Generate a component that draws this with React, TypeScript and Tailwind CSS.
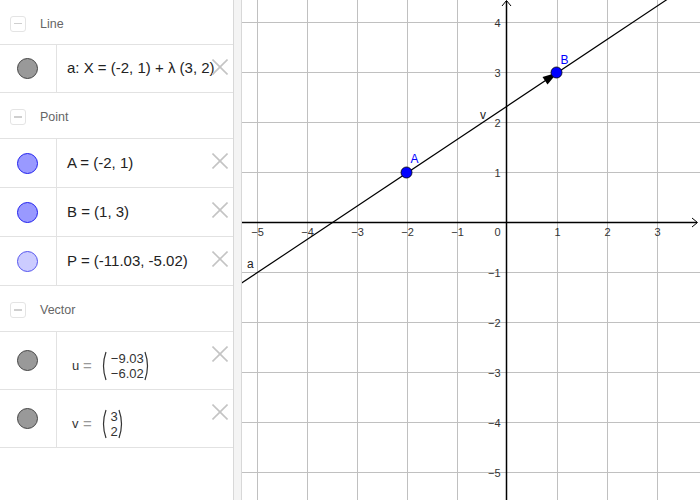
import React from "react";

const font = { fontFamily: '"Liberation Sans", Arial, sans-serif' };

function XIcon() {
  return (
    <svg width="16" height="16" viewBox="0 0 16 16" className="absolute right-[5px] top-[14px]">
      <line x1="0.5" y1="0.5" x2="15.5" y2="15.5" stroke="#c4c4c4" strokeWidth="1.6" />
      <line x1="15.5" y1="0.5" x2="0.5" y2="15.5" stroke="#c4c4c4" strokeWidth="1.6" />
    </svg>
  );
}

function Header({ title, h }: { title: string; h: string }) {
  return (
    <div className={`flex items-center border-b border-[#e2e2e2] ${h}`}>
      <div className="ml-[10px] mt-[3px] flex h-[16px] w-[16px] items-center justify-center rounded-[3px] border border-[#e4e4e4]">
        <div className="h-[1.5px] w-[8px] bg-[#cfcfcf]" />
      </div>
      <span className="ml-[14px] mt-[4px] text-[12.5px] text-[#666]">{title}</span>
    </div>
  );
}

function Dot({ fill, stroke }: { fill: string; stroke: string }) {
  return <div className={`h-[21px] w-[21px] rounded-full border ${fill} ${stroke}`} />;
}

function Row({ h, dot, children, top }: { h: string; dot: React.ReactNode; children: React.ReactNode; top?: boolean }) {
  return (
    <div className={`relative flex border-b border-[#e2e2e2] ${h}`}>
      <div className="flex w-[57px] shrink-0 items-center justify-center border-r border-[#e2e2e2] pr-[1px]">{dot}</div>
      <div className={`flex flex-1 pl-[10px] ${top ? "items-start pt-[19px]" : "items-center"} text-[15px] text-[#222] whitespace-nowrap`}>
        {children}
      </div>
      <XIcon />
    </div>
  );
}

function Paren({ h, right }: { h: number; right?: boolean }) {
  const d = right ? `M1 1 Q6 ${h / 2} 1 ${h - 1}` : `M6 1 Q1 ${h / 2} 6 ${h - 1}`;
  return (
    <svg width="7" height={h} viewBox={`0 0 7 ${h}`}>
      <path d={d} stroke="#333" strokeWidth="1.2" fill="none" />
    </svg>
  );
}

function VecRow({ name, vals, nw }: { name: string; vals: string[]; nw: string }) {
  return (
    <div className="flex items-center text-[13px] text-[#333]">
      <span className="ml-[5px] w-[11px]">{name}</span>
      <span className="text-[#999] text-[15px]">=</span>
      <span className="ml-[8px] flex items-center">
        <Paren h={30} />
        <span className={`ml-[3px] flex flex-col items-end leading-[15px] ${nw}`}>
          {vals.map((v) => (
            <span key={v}>{v}</span>
          ))}
        </span>
        <Paren h={30} right />
      </span>
    </div>
  );
}

function Graph() {
  const ox = 265.5;
  const oy = 222.5;
  const u = 50;
  const xs = [-5, -4, -3, -2, -1, 1, 2, 3];
  const ys = [4, 3, 2, 1, -1, -2, -3, -4, -5];
  const px = (x: number) => ox + x * u;
  const py = (y: number) => oy - y * u;
  const lineY = (x: number) => py(1) - (2 / 3) * (x - px(-2));
  const A = [px(-2), py(1)];
  const B = [px(1), py(3)];
  const dx = 0.832, dy = -0.5547;
  const L = 15, W = 4.5;
  const bx = B[0] - L * dx, by = B[1] - L * dy;
  const nx = -dy * W, ny = dx * W;
  return (
    <svg width="458" height="500" viewBox="0 0 458 500" className="block" style={font}>
      <rect width="458" height="500" fill="#fff" />
      {[-5, -4, -3, -2, -1, 1, 2, 3].map((x) => (
        <line key={"gx" + x} x1={px(x)} y1={0} x2={px(x)} y2={500} stroke="#c0c0c0" strokeWidth="1" />
      ))}
      {[4, 3, 2, 1, -1, -2, -3, -4, -5].map((y) => (
        <line key={"gy" + y} x1={0} y1={py(y)} x2={458} y2={py(y)} stroke="#c0c0c0" strokeWidth="1" />
      ))}
      <line x1={0} y1={oy} x2={455} y2={oy} stroke="#000" strokeWidth="1.5" />
      <polyline points={`450,${oy - 4.5} 455.5,${oy} 450,${oy + 4.5}`} stroke="#000" strokeWidth="1" fill="none" />
      <line x1={ox - 1} y1={1} x2={ox - 1} y2={500} stroke="#000" strokeWidth="1.5" />
      <polyline points={`${ox - 5.5},6 ${ox - 1},0.5 ${ox + 3.5},6`} stroke="#000" strokeWidth="1" fill="none" />
      {xs.map((x) => (
        <text key={"lx" + x} x={px(x)} y={236} fontSize="11" fill="#333" textAnchor="middle">
          {x < 0 ? "\u2212" + -x : x}
        </text>
      ))}
      <text x={ox - 7} y={236} fontSize="11" fill="#333" textAnchor="end">0</text>
      {ys.map((y) => (
        <text key={"ly" + y} x={ox - 7} y={py(y) + 4} fontSize="11" fill="#333" textAnchor="end">
          {y < 0 ? "\u2212" + -y : y}
        </text>
      ))}
      <line x1={-20} y1={lineY(-20)} x2={500} y2={lineY(500)} stroke="#000" strokeWidth="1.2" />
      <polygon points={`${B[0]},${B[1]} ${bx + nx},${by + ny} ${bx - nx},${by - ny}`} fill="#000" />
      <circle cx={A[0] - 1} cy={A[1]} r="5.5" fill="#0000ff" stroke="#000" strokeWidth="0.8" />
      <circle cx={B[0] - 1} cy={B[1]} r="5.5" fill="#0000ff" stroke="#000" strokeWidth="0.8" />
      <text x={A[0] + 3} y={A[1] - 10} fontSize="12" fill="#0000ff">A</text>
      <text x={B[0] + 3} y={B[1] - 9} fontSize="12" fill="#0000ff">B</text>
      <text x={238} y={119} fontSize="12" fill="#222">v</text>
      <text x={5} y={268} fontSize="12" fill="#222">a</text>
    </svg>
  );
}

export default function App() {
  return (
    <div className="flex h-[500px] w-[700px] overflow-hidden bg-white" style={font}>
      <div className="flex w-[234px] shrink-0 flex-col border-r border-[#d8d8d8]">
        <Header title="Line" h="h-[45px]" />
        <Row h="h-[48px]" dot={<Dot fill="bg-[#999999]" stroke="border-[#444]" />}>
          <span>a: X = (-2, 1) + λ (3, 2)</span>
        </Row>
        <Header title="Point" h="h-[46px]" />
        <Row h="h-[49px]" dot={<Dot fill="bg-[#9999ff]" stroke="border-[#2020ee]" />}>
          <span>A = (-2, 1)</span>
        </Row>
        <Row h="h-[49px]" dot={<Dot fill="bg-[#9999ff]" stroke="border-[#2020ee]" />}>
          <span>B = (1, 3)</span>
        </Row>
        <Row h="h-[49px]" dot={<Dot fill="bg-[#ccccff]" stroke="border-[#5555ee]" />}>
          <span>P = (-11.03, -5.02)</span>
        </Row>
        <Header title="Vector" h="h-[46px]" />
        <Row h="h-[58px]" top dot={<Dot fill="bg-[#999999]" stroke="border-[#444]" />}>
          <VecRow name="u" vals={["\u22129.03", "\u22126.02"]} nw="w-[34px]" />
        </Row>
        <Row h="h-[58px]" top dot={<Dot fill="bg-[#999999]" stroke="border-[#444]" />}>
          <VecRow name="v" vals={["3", "2"]} nw="w-[8px]" />
        </Row>
      </div>
      <div className="w-[8px] shrink-0 border-r border-[#d8d8d8] bg-[#f4f4f4]" />
      <div className="flex-1">
        <Graph />
      </div>
    </div>
  );
}
